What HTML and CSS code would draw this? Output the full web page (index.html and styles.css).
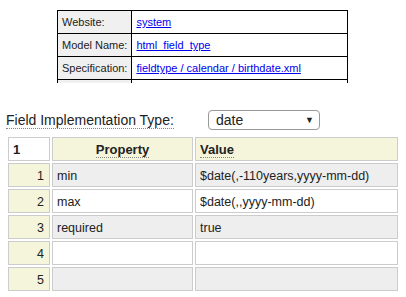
FILE: index.html
```html
<!DOCTYPE html>
<html lang="en">
<head>
    <meta charset="UTF-8">
    <title>Field Type</title>
    <link rel="stylesheet" href="styles.css">
</head>
<body>
    <div class="info">
        <table class="info-table">
            <tr>
                <td class="info-label">Website:</td>
                <td><a href="#">system</a></td>
            </tr>
            <tr>
                <td class="info-label">Model Name:</td>
                <td><a href="#">html_field_type</a></td>
            </tr>
            <tr>
                <td class="info-label">Specification:</td>
                <td><a href="#">fieldtype / calendar / birthdate.xml</a></td>
            </tr>
            <tr>
                <td class="info-label">&nbsp;</td>
                <td>&nbsp;</td>
            </tr>
        </table>
    </div>

    <div class="field">
        <div class="field-label"><span>Field Implementation Type:</span></div>
        <div class="select">
            <span>date</span>
            <span class="arrow">&#9660;</span>
        </div>
    </div>

    <table class="grid">
        <tr>
            <th class="num-head">1</th>
            <th class="prop-head"><span class="hint">Property</span></th>
            <th class="value-head"><span class="hint">Value</span></th>
        </tr>
        <tr class="odd">
            <td class="num">1</td>
            <td>min</td>
            <td>$date(,-110years,yyyy-mm-dd)</td>
        </tr>
        <tr>
            <td class="num">2</td>
            <td>max</td>
            <td>$date(,,yyyy-mm-dd)</td>
        </tr>
        <tr class="odd">
            <td class="num">3</td>
            <td>required</td>
            <td>true</td>
        </tr>
        <tr>
            <td class="num">4</td>
            <td></td>
            <td></td>
        </tr>
        <tr class="odd">
            <td class="num">5</td>
            <td></td>
            <td></td>
        </tr>
    </table>
</body>
</html>
```

FILE: styles.css
```css
body {
    font-family: "Liberation Sans", Arial, sans-serif;
    margin: 0;
    padding: 0;
    color: #222;
}
.info {
    margin: 10px 0 0 57px;
    width: 291px;
    height: 73px;
    overflow: hidden;
}
.info-table {
    width: 291px;
    border-collapse: collapse;
    border: 1px solid #000;
    font-size: 11px;
}
.info-table td {
    border: 1px solid #000;
    height: 23px;
    padding: 0 4px;
    box-sizing: border-box;
}
.info-table a {
    color: #00e;
}
.info-label {
    width: 73px;
    background-color: #f0f0f0;
    white-space: nowrap;
}
.field {
    display: flex;
    align-items: center;
    margin: 27px 0 0 6px;
    height: 20px;
}
.field-label {
    width: 202px;
    font-size: 14px;
    line-height: 16px;
    white-space: nowrap;
}
.field-label span,
.hint {
    border-bottom: 1px dotted #888;
}
.select {
    display: flex;
    align-items: center;
    justify-content: space-between;
    width: 112px;
    height: 20px;
    box-sizing: border-box;
    border: 1px solid #999;
    border-radius: 4px;
    padding: 0 5px 0 7px;
    font-size: 14px;
}
.arrow {
    font-size: 9px;
}
.grid {
    margin: 5px 0 0 6px;
    border-spacing: 2px;
    font-size: 12.5px;
}
.grid th,
.grid td {
    border: 1px solid #ccc;
    height: 24px;
    box-sizing: border-box;
    padding: 1px 4px 0;
}
.grid th {
    background-color: #f5f5dc;
    font-size: 13px;
}
.num-head {
    width: 42px;
    text-align: left;
    background-color: #fff !important;
}
.prop-head {
    width: 141px;
    text-align: center;
}
.value-head {
    width: 203px;
    text-align: left;
}
.grid .odd td {
    background-color: #eee;
}
.grid td.num {
    background-color: #f5f5dc;
    text-align: right;
    padding-right: 5px;
}
```
